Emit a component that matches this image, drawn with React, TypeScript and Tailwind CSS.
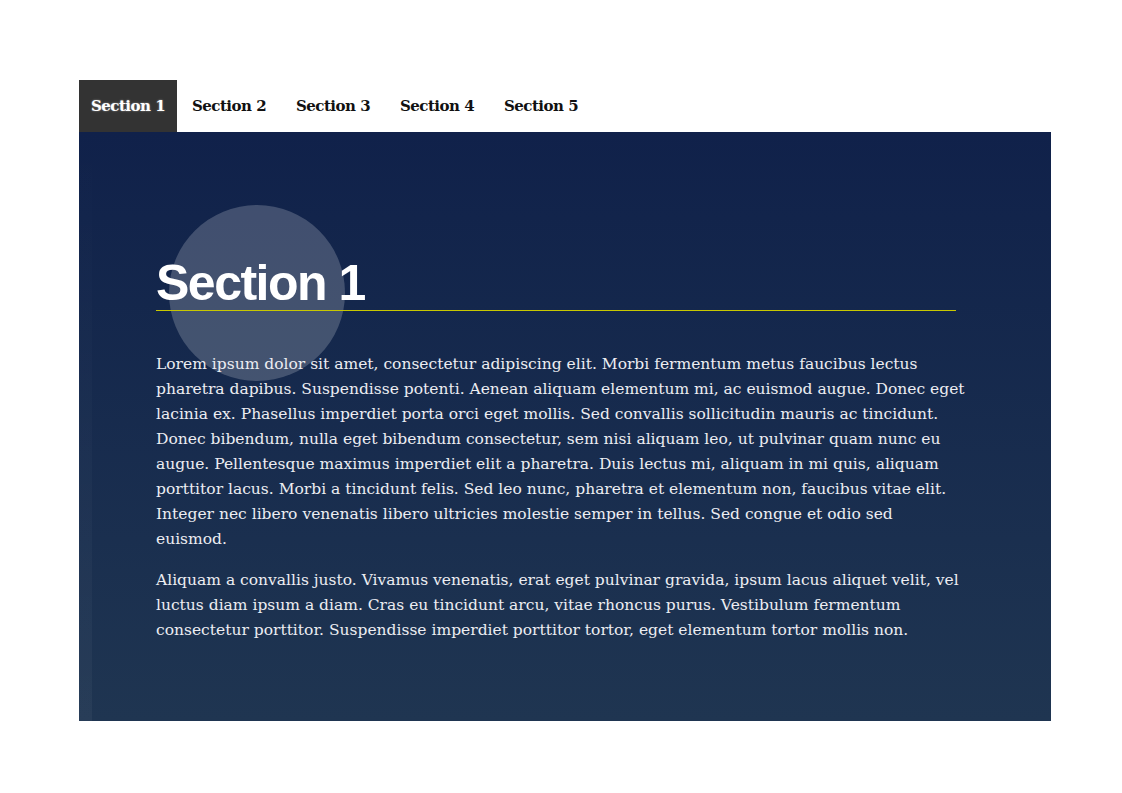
import { useState } from 'react';

const tabs = ['Section 1', 'Section 2', 'Section 3', 'Section 4', 'Section 5'];

const serif = { fontFamily: '"DejaVu Serif", "Liberation Serif", serif' };

export default function App() {
  const [active, setActive] = useState(0);

  return (
    <div className="min-h-[793px] bg-white pt-[80px] pl-[79px]">
      <div className="w-[972px]">
        {/* tab strip */}
        <nav className="flex h-[52px] pt-px" style={serif}>
          {tabs.map((t, i) => (
            <button
              key={t}
              onClick={() => setActive(i)}
              className={`${i === 0 ? 'w-[98px] -mt-px' : 'w-[104px]'} flex items-center justify-center text-[15px] font-bold tracking-[-0.5px] ${
                active === i
                  ? 'bg-[#333333] text-white [text-shadow:0_0_2px_rgba(255,255,255,0.5)]'
                  : 'text-[#111111]'
              }`}
            >
              {t}
            </button>
          ))}
        </nav>

        {/* panel */}
        <div className="relative h-[589px] overflow-hidden bg-gradient-to-b from-[#10214a] to-[#1f3551]">
          <div className="absolute left-0 top-0 bottom-0 w-[13px] bg-gradient-to-b from-white/0 to-white/[0.04]" />
          <div className="absolute left-[90px] top-[73px] w-[176px] h-[176px] rounded-full bg-white/20" />

          <div className="relative pl-[77px] pt-[126px] w-[877px]">
            <h2
              className="text-[50px] leading-none font-bold text-white tracking-[-1.5px] pb-[2px]"
              style={{ fontFamily: '"Liberation Sans", Arial, sans-serif' }}
            >
              Section {active + 1}
            </h2>
            <div className="h-px bg-[#c8c800]" />

            <div className="mt-[41px] text-[15.5px] leading-[25px] text-[#ecedf2]" style={serif}>
              <p className="whitespace-nowrap">
                Lorem ipsum dolor sit amet, consectetur adipiscing elit. Morbi fermentum metus faucibus lectus<br />
                pharetra dapibus. Suspendisse potenti. Aenean aliquam elementum mi, ac euismod augue. Donec eget<br />
                lacinia ex. Phasellus imperdiet porta orci eget mollis. Sed convallis sollicitudin mauris ac tincidunt.<br />
                Donec bibendum, nulla eget bibendum consectetur, sem nisi aliquam leo, ut pulvinar quam nunc eu<br />
                augue. Pellentesque maximus imperdiet elit a pharetra. Duis lectus mi, aliquam in mi quis, aliquam<br />
                porttitor lacus. Morbi a tincidunt felis. Sed leo nunc, pharetra et elementum non, faucibus vitae elit.<br />
                Integer nec libero venenatis libero ultricies molestie semper in tellus. Sed congue et odio sed<br />
                euismod.
              </p>
              <p className="whitespace-nowrap mt-[16px]">
                Aliquam a convallis justo. Vivamus venenatis, erat eget pulvinar gravida, ipsum lacus aliquet velit, vel<br />
                luctus diam ipsum a diam. Cras eu tincidunt arcu, vitae rhoncus purus. Vestibulum fermentum<br />
                consectetur porttitor. Suspendisse imperdiet porttitor tortor, eget elementum tortor mollis non.
              </p>
            </div>
          </div>
        </div>
      </div>
    </div>
  );
}
